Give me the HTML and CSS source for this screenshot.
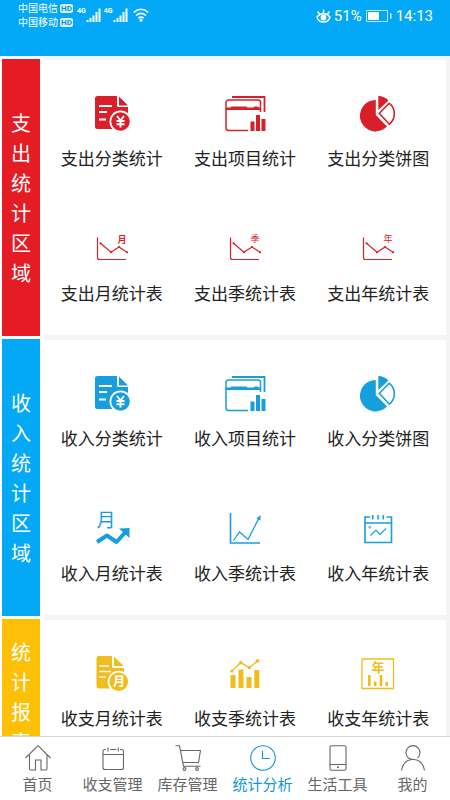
FILE: index.html
```html
<!DOCTYPE html>
<html lang="zh-CN">
<head>
<meta charset="utf-8">
<meta name="viewport" content="width=device-width, initial-scale=1">
<title>统计分析</title>
<link rel="stylesheet" href="styles.css">
</head>
<body>
<svg class="defs" aria-hidden="true">
  <symbol id="doc-yen" viewBox="0 0 42 38">
    <path fill="currentColor" d="M6.500 1H26v9.500a1.500 1.500 0 0 0 1.500 1.500H37v22H6.500A2.500 2.500 0 0 1 4 31.500v-28A2.500 2.500 0 0 1 6.500 1zM28 1.500l9 9h-9z"/>
    <path stroke="#fff" stroke-width="1.800" d="M8 11h13M8 17h8M8 24.500h7"/>
    <circle cx="29.500" cy="26.500" r="11" fill="#fff"/>
    <circle cx="29.500" cy="26.500" r="9.300" fill="currentColor"/>
    <path fill="none" stroke="#fff" stroke-width="1.900" d="M26 21l3.500 4.500L33 21M29.500 25v7.500M25.500 26h8M25.500 29.300h8"/>
  </symbol>
  <symbol id="project" viewBox="0 0 42 38">
    <path fill="none" stroke="currentColor" stroke-width="1.800" d="M8 2h32.500v15"/>
    <path fill="none" stroke="currentColor" stroke-width="1.500" d="M24 35.500H4.500a2.500 2.500 0 0 1-2.500-2.500V7.500A2.500 2.500 0 0 1 4.500 5H34a2.500 2.500 0 0 1 2.500 2.500V17"/>
    <path fill="currentColor" d="M2 12.500h4.500l1-1h15l1 1h6l1-1h3.500l1 1h1v2.500H2z"/>
    <path fill="currentColor" d="M26.500 26.500h4V36h-4zM32 20h4v16h-4zM37.500 24h4v12h-4z"/>
  </symbol>
  <symbol id="pie" viewBox="0 0 42 38">
    <path fill="currentColor" d="M18.800 5A15.700 15.700 0 1 0 30 31.500L18.800 20z"/>
    <path fill="currentColor" d="M21.300 15V1A15 15 0 0 1 31.500 5.500z"/>
    <path fill="none" stroke="currentColor" stroke-width="1.600" d="M22.300 18.300L32.300 8.300Q37.400 12 37.300 19Q37.200 25.500 32.300 29.200z"/>
  </symbol>
  <symbol id="trend-down" viewBox="0 0 42 38">
    <path fill="none" stroke="currentColor" stroke-width="1.200" d="M6.500 7.500v20a2 2 0 0 0 2 2H35M9.500 13.300L20 22.300l8-5.300 8 5.300"/>
    <g fill="currentColor"><circle cx="9.500" cy="13.300" r="1.100"/><circle cx="20" cy="22.300" r="1.100"/><circle cx="28" cy="17" r="1.100"/><circle cx="36" cy="22.300" r="1.100"/></g>
  </symbol>
  <symbol id="arrow-up" viewBox="0 0 42 38">
    <path fill="none" stroke="currentColor" stroke-width="4" stroke-linejoin="round" d="M6 32l10-6.500L25.500 32 35 21.500"/>
    <path fill="currentColor" d="M28 18.500l10.500-.5v10z"/>
  </symbol>
  <symbol id="line-up" viewBox="0 0 42 38">
    <path fill="none" stroke="currentColor" stroke-width="1.600" d="M6.500 3v30H36"/>
    <path fill="none" stroke="currentColor" stroke-width="1.300" d="M9.500 30.500l6-8.500 8.500 7.500L35 8"/>
    <path fill="currentColor" d="M36.500 5v5.500l-4-2z"/>
  </symbol>
  <symbol id="calendar-trend" viewBox="0 0 42 38">
    <path fill="none" stroke="currentColor" stroke-width="1.600" d="M13 7H8v25.500h26.500V7h-5M8 13h26.500M15.700 5v4.500M21 5v4.500M26.300 5v4.500"/>
    <path fill="none" stroke="currentColor" stroke-width="1.200" d="M13.500 25.500l5.500-5.500 4 4.500 6-6"/>
    <path fill="#79bfd8" d="M11.500 16h2.500v2.500h-2.500z"/>
  </symbol>
  <symbol id="doc-month" viewBox="0 0 42 38">
    <path fill="currentColor" d="M7.500 1H21v10.500a1.500 1.500 0 0 0 1.500 1.500H33v20.500H7.500A2 2 0 0 1 5.500 31.500V3A2 2 0 0 1 7.500 1zM23 1.500l9.500 9.500H23z"/>
    <path stroke="#fff" stroke-width="1.600" d="M8.500 11H18M8.500 16.500H20M8.500 22h6"/>
    <circle cx="27.700" cy="26.700" r="11" fill="#fff"/>
    <circle cx="27.700" cy="26.700" r="9.300" fill="currentColor"/>
  </symbol>
  <symbol id="bars-trend" viewBox="0 0 42 38">
    <path fill="currentColor" d="M6.500 20h5v13h-5zM14.500 14.500h5V33h-5zM22.500 22h5v11h-5zM30.300 15h5v18h-5z"/>
    <path fill="none" stroke="currentColor" stroke-width="1.400" d="M7.700 16l9-8.300 8.600 5 8.400-7"/>
    <g fill="currentColor"><circle cx="7.700" cy="16" r="1.600"/><circle cx="16.700" cy="7.700" r="1.800"/><circle cx="25.300" cy="12.700" r="1.600"/><circle cx="33.700" cy="5.700" r="1.800"/></g>
  </symbol>
  <symbol id="frame-bars" viewBox="0 0 42 38">
    <path fill="none" stroke="currentColor" stroke-width="1.300" d="M5 4h31.500v29.500H5z"/>
    <path stroke="currentColor" stroke-width="2.600" d="M12.300 20v11M18.300 26.500V31M24 20v11M29.700 27v4"/>
  </symbol>
  <symbol id="signal" viewBox="0 0 16 16">
    <path stroke="#fff" stroke-width="2" d="M1.500 15v-2M4.500 15v-4M7.500 15V8.500M10.500 15V5M13.500 15V1.500"/>
  </symbol>
</svg>

<header class="topbar">
  <div class="carriers">
    <div class="carrier">中国电信<span class="hd">HD</span></div>
    <div class="carrier">中国移动<span class="hd">HD</span></div>
  </div>
  <div class="network"><span>4G</span><svg class="signal"><use href="#signal"/></svg></div>
  <div class="network"><span>4G</span><svg class="signal"><use href="#signal"/></svg></div>
  <svg class="wifi" viewBox="0 0 16 14" fill="none" stroke="#fff" stroke-width="1.600"><path d="M.700 4.500Q8-2 15.300 4.500M3 7.500q5-4.300 10 0M5.300 10.200q2.700-2.200 5.400 0"/><circle cx="8" cy="12.200" r=".8" fill="#fff"/></svg>
  <div class="status-right">
    <svg class="eye" viewBox="0 0 15 14" fill="none" stroke="#fff" stroke-width="1.400"><path d="M1 8q6.500-7 13 0-1.500 5-6.500 5T1 8zM7.500 4V.500M3.500 5L1.500 2.500M11.500 5l2-2.500"/><circle cx="7.500" cy="8.500" r="2.200" fill="#fff"/></svg>
    <span>51%</span>
    <svg class="battery" viewBox="0 0 26 12"><path fill="none" stroke="#fff" stroke-opacity=".7" d="M.500.500h21v11H.500z"/><path fill="#fff" d="M2 2h11v8H2zM24 3.500h1.500v5H24z"/></svg>
    <time>14:13</time>
  </div>
</header>

<main class="content">
  <section class="group expense">
    <h2 class="strip">支出统计区域</h2>
    <div class="panel"><div class="card">
      <a class="item" href="#"><svg class="icon"><use href="#doc-yen"/></svg><span>支出分类统计</span></a>
      <a class="item" href="#"><svg class="icon"><use href="#project"/></svg><span>支出项目统计</span></a>
      <a class="item" href="#"><svg class="icon"><use href="#pie"/></svg><span>支出分类饼图</span></a>
      <a class="item" href="#"><svg class="icon"><use href="#trend-down"/><text class="mark small bold" x="31" y="13">月</text></svg><span>支出月统计表</span></a>
      <a class="item" href="#"><svg class="icon"><use href="#trend-down"/><text class="mark small" x="31" y="12">季</text></svg><span>支出季统计表</span></a>
      <a class="item" href="#"><svg class="icon"><use href="#trend-down"/><text class="mark small" x="31" y="12">年</text></svg><span>支出年统计表</span></a>
    </div></div>
  </section>
  <section class="group income">
    <h2 class="strip">收入统计区域</h2>
    <div class="panel"><div class="card">
      <a class="item" href="#"><svg class="icon"><use href="#doc-yen"/></svg><span>收入分类统计</span></a>
      <a class="item" href="#"><svg class="icon"><use href="#project"/></svg><span>收入项目统计</span></a>
      <a class="item" href="#"><svg class="icon"><use href="#pie"/></svg><span>收入分类饼图</span></a>
      <a class="item" href="#"><svg class="icon"><use href="#arrow-up"/><text class="mark large" x="15" y="17">月</text></svg><span>收入月统计表</span></a>
      <a class="item" href="#"><svg class="icon"><use href="#line-up"/></svg><span>收入季统计表</span></a>
      <a class="item" href="#"><svg class="icon"><use href="#calendar-trend"/></svg><span>收入年统计表</span></a>
    </div></div>
  </section>
  <section class="group report">
    <h2 class="strip">统计报表</h2>
    <div class="panel"><div class="card">
      <a class="item" href="#"><svg class="icon"><use href="#doc-month"/><text class="mark light bold" x="28" y="31">月</text></svg><span>收支月统计表</span></a>
      <a class="item" href="#"><svg class="icon"><use href="#bars-trend"/></svg><span>收支季统计表</span></a>
      <a class="item" href="#"><svg class="icon"><use href="#frame-bars"/><text class="mark medium bold" x="21" y="17">年</text></svg><span>收支年统计表</span></a>
    </div></div>
  </section>
</main>

<nav class="tabs">
  <a class="tab" href="#"><svg viewBox="0 0 26 26"><path d="M.500 13L13 .700 25.500 13M4.500 10v13.500a1.500 1.500 0 0 0 1.500 1.500h4.500V15h5.500v10h4.500a1.500 1.500 0 0 0 1.500-1.500V10"/></svg>首页</a>
  <a class="tab" href="#"><svg viewBox="0 0 26 26"><path d="M6 4.500H5A2 2 0 0 0 3 6.500v16A2 2 0 0 0 5 24.500h16.500a2 2 0 0 0 2-2v-16a2 2 0 0 0-2-2H20M10 4.500h6.500M3 9.500h20.500M8 2.500v4M18.300 2.500v4"/></svg>收支管理</a>
  <a class="tab" href="#"><svg viewBox="0 0 26 26"><path d="M.500.700h4l4 20.500h17M5.500 5.500h20L23.500 17.500H8"/><circle cx="9.500" cy="24" r="1.400"/><circle cx="22" cy="24" r="1.400"/></svg>库存管理</a>
  <a class="tab active" href="#" aria-current="page"><svg viewBox="0 0 26 26"><circle cx="13" cy="13" r="12.300"/><path d="M12.500 6v7.500h7.500"/></svg>统计分析</a>
  <a class="tab" href="#"><svg viewBox="0 0 26 26"><rect x="5" y=".7" width="16" height="24.500" rx="1.500"/><path d="M5 19.500h16"/><circle cx="13" cy="22.300" r=".5"/></svg>生活工具</a>
  <a class="tab" href="#"><svg viewBox="0 0 26 26"><path d="M17.500 13a7 7 0 1 0-9 0M1.500 25.500Q3.500 14.500 13 14.500T24.500 25.500M8.500 13q2 1.500 4.500 1.500"/></svg>我的</a>
</nav>
</body>
</html>
```
FILE: styles.css
```css
* { box-sizing: border-box; }

body {
  margin: 0;
  height: 100vh;
  display: flex;
  flex-direction: column;
  background: #fff;
  color: #222;
  font-family: "Noto Sans CJK SC", sans-serif;
}

a { color: inherit; text-decoration: none; }

.defs { position: absolute; width: 0; height: 0; }

.topbar {
  flex: none;
  height: 56px;
  padding: 1px 17px 0 18px;
  display: flex;
  align-items: flex-start;
  background: #03a9f6;
  color: #fff;
}

.carriers { margin-right: 4px; }

.carrier {
  display: flex;
  align-items: center;
  gap: 2px;
  font-size: 10px;
  line-height: 14px;
}

.hd {
  width: 13px;
  border-radius: 2px;
  background: #d9f2ff;
  color: #0795d8;
  font: 700 8px/9px Roboto, sans-serif;
  text-align: center;
}

.network {
  display: flex;
  margin: 6px 2px 0 0;
  font: 700 7px/8px Roboto, sans-serif;
}

.signal { width: 16px; height: 16px; }
.wifi { width: 16px; height: 14px; margin: 7px 0 0 2px; }

.status-right {
  display: flex;
  align-items: center;
  gap: 3px;
  margin-left: auto;
  font: 15px/30px Roboto, sans-serif;
}

.eye { width: 15px; height: 14px; }
.battery { width: 26px; height: 12px; margin: 0 1px; }

.content { flex: 1; min-height: 0; overflow: hidden; }

.group { display: flex; }
.expense { --tone: #e51c23; }
.income { --tone: #03a9f4; --ink: #179fdd; }
.report { --tone: #fdc006; --ink: #efbd1d; }

.strip {
  flex: none;
  width: 38px;
  margin: 3px 4px 0 2px;
  padding: 18px 9px;
  display: flex;
  align-items: center;
  background: var(--tone);
  color: #fff;
  font-size: 20px;
  font-weight: 400;
  line-height: 30px;
  word-break: break-all;
}

.panel { flex: 1; padding: 4px 4px 1px 0; background: #f4f4f4; }

.card {
  height: 100%;
  padding: 0 1px 5px;
  display: grid;
  grid-template-columns: repeat(3, 1fr);
  align-content: start;
  background: #fff;
}

.item {
  padding: 35px 0 25px;
  display: flex;
  flex-direction: column;
  align-items: center;
  gap: 13px;
  font-size: 17px;
  line-height: 24px;
  white-space: nowrap;
}

.icon { width: 42px; height: 38px; overflow: visible; color: var(--ink, #d9202a); }

.mark { fill: currentColor; text-anchor: middle; font-size: 12px; }
.small { font-size: 9px; }
.medium { font-size: 13px; }
.large { font-size: 19px; }
.light { fill: #fff; }
.bold { font-weight: 700; }

.tabs {
  flex: none;
  display: grid;
  grid-template-columns: repeat(6, 1fr);
  border-top: 1px solid #d8d8d8;
  background: #fff;
}

.tab {
  padding: 8px 0 6px;
  display: flex;
  flex-direction: column;
  align-items: center;
  gap: 2px;
  color: #666;
  font-size: 15px;
  line-height: 21px;
  white-space: nowrap;
}

.tab svg {
  width: 26px;
  height: 26px;
  fill: none;
  stroke: currentColor;
  stroke-width: 1.1;
}

.active { color: #1296db; }
```
